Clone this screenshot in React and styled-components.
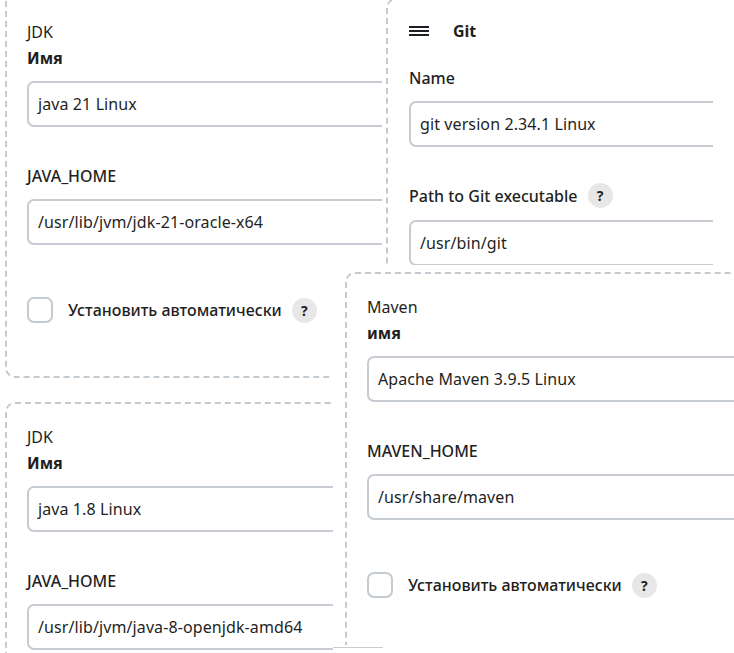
import React from "react";
import styled, { createGlobalStyle } from "styled-components";

const GlobalStyle = createGlobalStyle`
  html, body {
    margin: 0;
    padding: 0;
    background: #fff;
  }
  body {
    font-family: "Noto Sans", "Open Sans", sans-serif;
    color: #1f1f23;
    -webkit-font-smoothing: antialiased;
  }
`;

export default function App() {
  return (
    <>
      <GlobalStyle />
      <Canvas>
        <Shot $x={0} $y={0} $w={382} $h={392}>
          <ToolPanel
            $top={-3}
            $left={5}
            $open
            kind="JDK"
            nameLabel="Имя"
            nameValue="java 21 Linux"
            homeLabel="JAVA_HOME"
            homeValue="/usr/lib/jvm/jdk-21-oracle-x64"
          />
        </Shot>

        <Shot $x={0} $y={392} $w={333} $h={261}>
          <ToolPanel
            $top={10}
            $left={5}
            kind="JDK"
            nameLabel="Имя"
            nameValue="java 1.8 Linux"
            homeLabel="JAVA_HOME"
            homeValue="/usr/lib/jvm/java-8-openjdk-amd64"
          />
        </Shot>

        <Shot $x={382} $y={0} $w={331} $h={265}>
          <GitPanel>
            <GitHeader>
              <DragHandle width="20" height="10" viewBox="0 0 20 10">
                <rect x="0" y="0" width="20" height="2" fill="#1f1f23" />
                <rect x="0" y="4" width="20" height="2" fill="#1f1f23" />
                <rect x="0" y="8" width="20" height="2" fill="#1f1f23" />
              </DragHandle>
              <GitTitle>Git</GitTitle>
            </GitHeader>
            <FieldLabel $gap={25}>Name</FieldLabel>
            <TextBox>git version 2.34.1 Linux</TextBox>
            <FieldLabel $gap={36}>
              Path to Git executable <Help>?</Help>
            </FieldLabel>
            <TextBox>/usr/bin/git</TextBox>
          </GitPanel>
        </Shot>

        <Shot $x={333} $y={265} $w={401} $h={380}>
          <ToolPanel
            $top={7}
            $left={12}
            kind="Maven"
            nameLabel="имя"
            nameValue="Apache Maven 3.9.5 Linux"
            homeLabel="MAVEN_HOME"
            homeValue="/usr/share/maven"
          />
        </Shot>
        <CropEdge />
      </Canvas>
    </>
  );
}

function ToolPanel({ $top, $left, $open, kind, nameLabel, nameValue, homeLabel, homeValue }) {
  return (
    <Panel $top={$top} $left={$left} $open={$open}>
      <Kind>{kind}</Kind>
      <NameLabel>{nameLabel}</NameLabel>
      <TextBox>{nameValue}</TextBox>
      <FieldLabel $gap={38}>{homeLabel}</FieldLabel>
      <TextBox>{homeValue}</TextBox>
      <CheckRow>
        <Checkbox />
        <CheckText>Установить автоматически</CheckText>
        <Help>?</Help>
      </CheckRow>
    </Panel>
  );
}

const Canvas = styled.div`
  position: relative;
  width: 734px;
  height: 653px;
  overflow: hidden;
  background: #fff;
`;

/* each screenshot fragment sits on the collage like a window on a desktop */
const Shot = styled.div`
  position: absolute;
  left: ${({ $x }) => $x}px;
  top: ${({ $y }) => $y}px;
  width: ${({ $w }) => $w}px;
  height: ${({ $h }) => $h}px;
  overflow: hidden;
  background: #fff;
`;

const Panel = styled.div`
  box-sizing: border-box;
  width: 560px;
  margin-top: ${({ $top }) => $top}px;
  margin-left: ${({ $left }) => $left}px;
  padding: ${({ $open }) => ($open ? "24px" : "22px")} 20px 53px 20px;
  border: 2px dashed #c4cbd0;
  border-top: ${({ $open }) => ($open ? "none" : "2px dashed #c4cbd0")};
  border-radius: ${({ $open }) => ($open ? "0 0 10px 10px" : "10px")};
  display: flex;
  flex-direction: column;
  align-items: flex-start;
`;

const Kind = styled.div`
  font-size: 16px;
  line-height: 22px;
  font-weight: 400;
`;

const NameLabel = styled.div`
  margin-top: 4px;
  font-size: 16px;
  line-height: 22px;
  font-weight: 700;
`;

const FieldLabel = styled.div`
  display: flex;
  align-items: center;
  gap: 10px;
  margin-top: ${({ $gap }) => $gap}px;
  font-size: 16px;
  line-height: 22px;
  font-weight: 500;
`;

const TextBox = styled.div`
  box-sizing: border-box;
  align-self: stretch;
  height: 46px;
  margin-top: 12px;
  padding: 0 9px;
  display: flex;
  align-items: center;
  border: 2px solid #c6ccd1;
  border-radius: 7px;
  background: #fff;
  font-size: 16px;
  letter-spacing: 0.1px;
  white-space: nowrap;
`;

const CheckRow = styled.div`
  display: flex;
  align-items: center;
  margin-top: 52px;
`;

const Checkbox = styled.span`
  box-sizing: border-box;
  width: 26px;
  height: 26px;
  border: 2px solid #c3cad0;
  border-radius: 7px;
  background: #fff;
`;

const CheckText = styled.span`
  margin-left: 15px;
  margin-right: 10px;
  font-size: 16px;
  line-height: 22px;
  font-weight: 500;
`;

const Help = styled.span`
  width: 25px;
  height: 25px;
  border-radius: 50%;
  background: #e7e7e8;
  display: inline-flex;
  align-items: center;
  justify-content: center;
  font-size: 14px;
  font-weight: 700;
  color: #1f1f23;
`;

const GitPanel = styled.div`
  box-sizing: border-box;
  width: 500px;
  margin-top: -2px;
  margin-left: 4px;
  padding: 20px 20px 40px 21px;
  border: 2px dashed #c4cbd0;
  border-radius: 10px;
  display: flex;
  flex-direction: column;
  align-items: flex-start;
`;

const GitHeader = styled.div`
  display: flex;
  align-items: center;
  gap: 24px;
  height: 22px;
`;

const DragHandle = styled.svg`
  display: block;
`;

const GitTitle = styled.div`
  font-size: 16px;
  line-height: 22px;
  font-weight: 700;
`;

const CropEdge = styled.div`
  position: absolute;
  left: 333px;
  top: 647px;
  width: 50px;
  height: 1px;
  background: #c6ccd1;
`;
